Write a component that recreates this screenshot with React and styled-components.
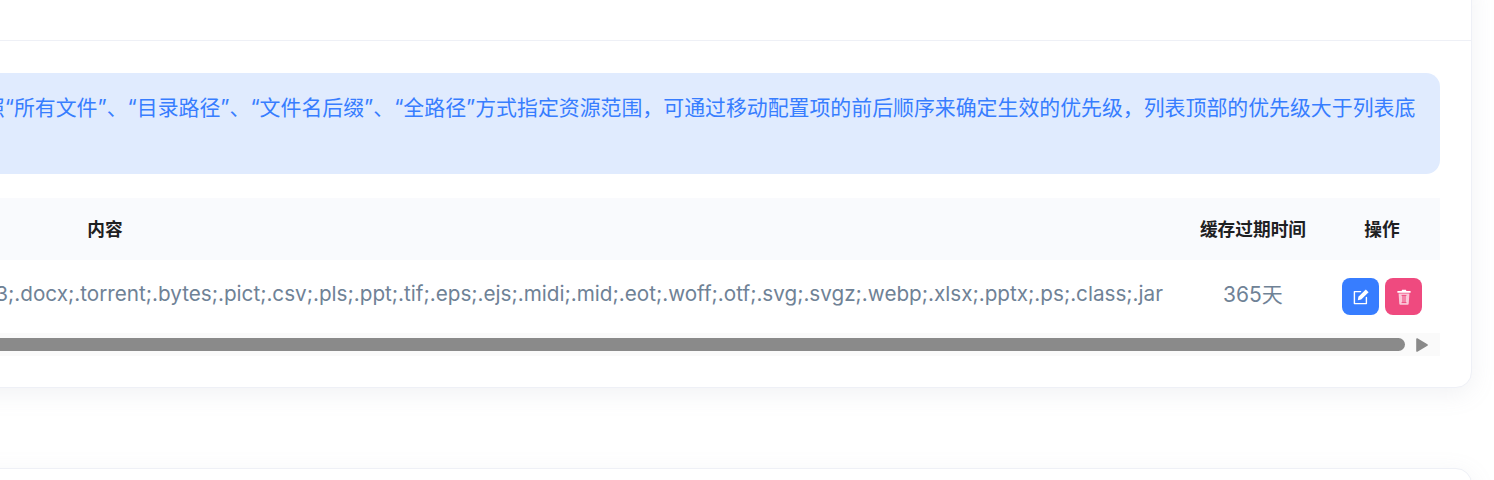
import styled, { createGlobalStyle } from "styled-components";

const GlobalStyle = createGlobalStyle`
	html, body {
		margin: 0;
		background: #fff;
		overflow: hidden;
		font-family: Inter, "Noto Sans CJK SC", sans-serif;
	}
`;

const extensions =
	".mov;.mp4;.avi;.jpg;.jpeg;.png;.gif;.bmp;.ico;.psd;.doc;.pdf;.xls;.zip;.rar;.7z;.gz;.mp3;.docx;.torrent;.bytes;.pict;.csv;.pls;.ppt;.tif;.eps;.ejs;.midi;.mid;.eot;.woff;.otf;.svg;.svgz;.webp;.xlsx;.pptx;.ps;.class;.jar";

const EditIcon = () => (
	<svg width="18" height="18" viewBox="0 0 18 18" fill="none">
		<path
			d="M8.6 3.6H2.4V15.6H14.4V9.4"
			stroke="#fff"
			strokeWidth="1.4"
			strokeLinecap="round"
			strokeLinejoin="round"
		/>
		<path d="M13.8 1.4l2.8 2.8-7.4 7.4-3.4.6.6-3.4z" fill="#fff" />
	</svg>
);

const TrashIcon = () => (
	<svg width="18" height="18" viewBox="0 0 18 18" fill="none">
		<path d="M3.6 5.4h10.8l-.7 10.4a1 1 0 0 1-1 .9H5.3a1 1 0 0 1-1-.9z" fill="#fff" opacity=".7" />
		<path d="M2.4 3h4.2l.5-1.2h3.8l.5 1.2h4.2v1.8H2.4z" fill="#fff" />
		<path d="M8 7.6v7M10 7.6v7" stroke="#ef4a7f" strokeWidth="1.1" />
		<path d="M6.6 7.4h4.8M6.6 14.6h4.8" stroke="#ef4a7f" strokeWidth="1" />
	</svg>
);

const App = () => {
	return (
		<>
			<GlobalStyle />
			<Page>
				<Card>
					<CardHeader />
					<CardBody>
						<Alert>
							缓存配置规则说明：可按照“所有文件”、“目录路径”、“文件名后缀”、“全路径”方式指定资源范围，可通过移动配置项的前后顺序来确定生效的优先级，列表顶部的优先级大于列表底部的优先级。
						</Alert>
						<TableScroll>
							<Table>
								<colgroup>
									<col style={{ width: 2154 }} />
									<col style={{ width: 142 }} />
									<col style={{ width: 116 }} />
								</colgroup>
								<thead>
									<tr>
										<HeadCell>内容</HeadCell>
										<HeadCell>缓存过期时间</HeadCell>
										<HeadCell>操作</HeadCell>
									</tr>
								</thead>
								<tbody>
									<tr>
										<ContentCell>{extensions}</ContentCell>
										<BodyCell>365天</BodyCell>
										<ActionCell>
											<Actions>
												<IconButton $color="#377dff">
													<EditIcon />
												</IconButton>
												<IconButton $color="#ef4a7f">
													<TrashIcon />
												</IconButton>
											</Actions>
										</ActionCell>
									</tr>
								</tbody>
							</Table>
						</TableScroll>
						<ScrollBar>
							<ScrollThumb />
							<svg width="12" height="14" viewBox="0 0 12 14">
								<path
									d="M1 1l10 6-10 6z"
									fill="#8a8a8a"
									stroke="#8a8a8a"
									strokeWidth="1.6"
									strokeLinejoin="round"
								/>
							</svg>
						</ScrollBar>
					</CardBody>
				</Card>
				<NextCard />
			</Page>
		</>
	);
};

export default App;

const Page = styled.div`
	width: 1772px;
	margin: -21px 0 0 -300px;
`;

const Card = styled.div`
	background: #fff;
	border: 1px solid #eef0f6;
	border-radius: 0 0 16px 16px;
	box-shadow: 0 6px 24px 0 rgba(140, 152, 164, 0.125);
`;

const CardHeader = styled.div`
	height: 60px;
	border-bottom: 1px solid #eef0f6;
`;

const CardBody = styled.div`
	padding: 32px 31px 31px 32px;
`;

const Alert = styled.div`
	background: #e0ebfe;
	color: #377dff;
	font-size: 20.9px;
	line-height: 1.5;
	padding: 18.6px 24px 19.8px 21px;
	border-radius: 14px;
	margin-bottom: 24px;
`;

const TableScroll = styled.div`
	display: flex;
	justify-content: flex-end;
	overflow: hidden;
`;

const Table = styled.table`
	flex: none;
	width: 2412px;
	table-layout: fixed;
	border-collapse: collapse;
`;

const HeadCell = styled.th`
	height: 60px;
	padding: 0 0 2px;
	background: #f9fafd;
	color: #1e2022;
	font-size: 17.7px;
	font-weight: 700;
	text-align: center;
`;

const BodyCell = styled.td`
	height: 66px;
	padding: 0 0 7px;
	color: #6f8296;
	font-size: 21px;
	text-align: center;
`;

const ContentCell = styled(BodyCell)`
	padding-right: 19px;
	font-size: 20.7px;
	text-align: right;
	white-space: nowrap;
	overflow: hidden;
`;

const ActionCell = styled.td`
	padding: 0;
`;

const Actions = styled.div`
	display: flex;
	justify-content: center;
	gap: 6px;
`;

const IconButton = styled.button`
	display: flex;
	align-items: center;
	justify-content: center;
	width: 37px;
	height: 37px;
	padding: 0;
	border: none;
	border-radius: 8px;
	background: ${(p) => p.$color};
`;

const ScrollBar = styled.div`
	display: flex;
	align-items: center;
	gap: 11px;
	height: 23px;
	padding-right: 12px;
	background: #fafafa;
`;

const ScrollThumb = styled.div`
	flex: 1;
	height: 13px;
	background: #8a8a8a;
	border-radius: 0 7px 7px 0;
`;

const NextCard = styled.div`
	height: 200px;
	margin-top: 80px;
	background: #fff;
	border: 1px solid #eef0f6;
	border-radius: 16px;
	box-shadow: 0 6px 24px 0 rgba(140, 152, 164, 0.125);
`;
